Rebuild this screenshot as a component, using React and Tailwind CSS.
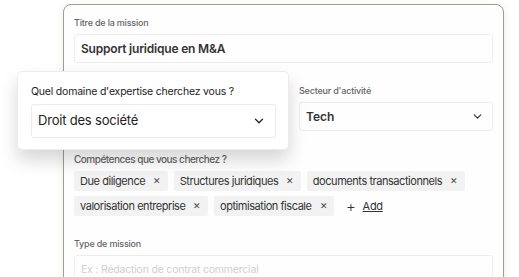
import React from "react";

const Chevron = ({ className, size = 13 }) => (
  <svg className={className} width={size} height={size} viewBox="0 0 24 24" fill="none" stroke="currentColor" strokeWidth="2.2" strokeLinecap="round" strokeLinejoin="round">
    <path d="M6 9l6 6 6-6" />
  </svg>
);

const Tag = ({ label }) => (
  <div className="flex items-center h-[20px] pl-[6px] pr-[7px] bg-[#f2f2f2] rounded-[2px] text-[11px] text-[#333] tracking-[-0.45px]">
    <span>{label}</span>
    <span className="ml-[8px] text-[9px] text-[#444]">✕</span>
  </div>
);

export default function App() {
  return (
    <div className="relative w-[519px] h-[277px] overflow-hidden bg-white" style={{ fontFamily: "Inter, 'Liberation Sans', sans-serif" }}>
      <div className="ml-[63px] mt-[4px] w-[441px] h-[300px] border-[1.5px] border-[#a29d8f] rounded-[8px] bg-[#fefefe] shadow-[0_2px_8px_rgba(0,0,0,0.08)] pl-[10px] pr-[10px] pt-[12px]">
        <div className="text-[9px] leading-[11px] font-medium text-[#666] tracking-[-0.2px]">Titre de la mission</div>
        <div className="mt-[6px] h-[29px] border border-[#f1eded] rounded-[3px] flex items-center pl-[6px] text-[12px] font-semibold text-[#333] tracking-[-0.2px]">
          Support juridique en M&amp;A
        </div>
        <div className="mt-[22px] grid grid-cols-[213px_1fr] gap-[12px]">
          <div></div>
          <div>
            <div className="text-[9px] leading-[11px] font-medium text-[#666] tracking-[-0.2px]">Secteur d'activité</div>
            <div className="mt-[6px] h-[29px] border border-[#f1eded] rounded-[3px] flex items-center justify-between pl-[6px] pr-[8px] text-[12px] font-semibold text-[#333]">
              <span>Tech</span>
              <Chevron className="text-[#333]" size={13} />
            </div>
          </div>
        </div>
        <div className="mt-[22px] text-[10px] leading-[12px] font-medium text-[#666] tracking-[-0.5px]">Compétences que vous cherchez ?</div>
        <div className="mt-[6px] flex flex-wrap gap-x-[6px] gap-y-[5px] w-[419px]">
          <Tag label="Due diligence" />
          <Tag label="Structures juridiques" />
          <Tag label="documents transactionnels" />
          <Tag label="valorisation entreprise" />
          <Tag label="optimisation fiscale" />
          <div className="flex items-center h-[20px] ml-[6px] text-[11px] text-[#333] tracking-[-0.3px]">
            <span className="text-[15px] leading-none mr-[7px] font-light">+</span>
            <span className="underline">Add</span>
          </div>
        </div>
        <div className="mt-[22px] text-[9px] leading-[11px] font-medium text-[#666] tracking-[-0.2px]">Type de mission</div>
        <div className="mt-[6px] h-[29px] border border-[#f1eded] rounded-[3px] flex items-center pl-[6px] text-[10.5px] text-[#cfcfcf] tracking-[-0.2px]">
          Ex : Rédaction de contrat commercial
        </div>
      </div>

      <div className="absolute left-[17px] top-[71px] w-[272px] h-[79px] bg-white rounded-[5px] border border-[#ececec] shadow-[0_10px_18px_rgba(0,0,0,0.16)] pl-[13px] pr-[12px] pt-[14px]">
        <div className="text-[10.5px] leading-[12px] text-[#222] tracking-[-0.2px]">Quel domaine d'expertise cherchez vous ?</div>
        <div className="mt-[6px] h-[34px] border border-[#f0eaea] rounded-[3px] flex items-center justify-between pl-[6px] pr-[9px] text-[13px] text-[#222] tracking-[-0.2px]">
          <span>Droit des société</span>
          <Chevron className="text-[#222]" size={14} />
        </div>
      </div>
    </div>
  );
}
